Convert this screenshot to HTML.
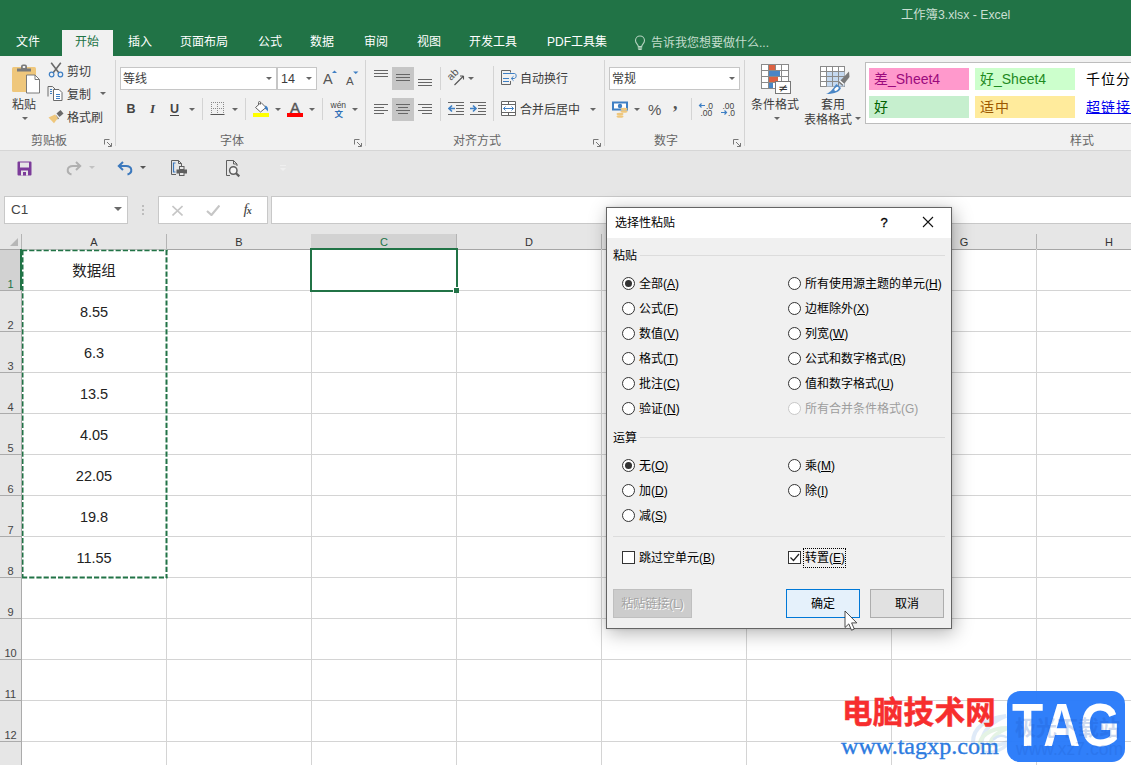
<!DOCTYPE html>
<html lang="zh-CN">
<head>
<meta charset="utf-8">
<title>工作簿3.xlsx - Excel</title>
<style>
*{box-sizing:border-box;margin:0;padding:0}
html,body{width:1131px;height:765px;overflow:hidden;background:#fff}
body{font-family:"Liberation Sans","Noto Sans CJK SC",sans-serif;font-size:12px;color:#262626}
#app{position:relative;width:1131px;height:765px;overflow:hidden;background:#fff}
.abs,#app div,#app span,#app svg{position:absolute}
.t{white-space:nowrap;line-height:16px;height:16px}
/* title + tabs */
#title{left:0;top:0;width:1131px;height:56px;background:#217346}
#title .name{left:901px;top:6.5px;color:#c9dfd2;font-size:12.3px}
.tab{top:33px;color:#fff;font-size:12px;line-height:18px;height:18px;white-space:nowrap}
#tabact{left:62px;top:30px;width:51px;height:27px;background:#f1f1f1}
/* ribbon */
#ribbon{left:0;top:56px;width:1131px;height:94px;background:#f1f1f1}
#ribline{left:0;top:150px;width:1131px;height:1px;background:#d6d6d6}
.sep{width:1px;background:#d4d4d4;top:4px;height:86px}
.sep2{width:1px;background:#d4d4d4}
.glabel{top:77px;color:#666;font-size:12px;line-height:16px;white-space:nowrap}
.rt{color:#3c3c3c;font-size:12px;line-height:16px;white-space:nowrap;margin-top:1px}
.box{background:#fff;border:1px solid #c6c6c6}
.arr{width:0;height:0;border-left:3px solid transparent;border-right:3px solid transparent;border-top:3px solid #666}
.sty{width:100px;height:22px;font-size:14px;line-height:22px;padding-left:5px;white-space:nowrap;overflow:hidden}
/* qat */
#qat{left:0;top:151px;width:1131px;height:39px;background:#e6e6e6}
#fbar{left:0;top:190px;width:1131px;height:43px;background:#e6e6e6}
/* grid */
#grid{left:0;top:233px;width:1131px;height:532px;background:#fff}
.ch{top:1px;height:16px;background:#e6e6e6;color:#333;font-size:11px;line-height:16px;text-align:center}
.rh{left:0;width:21px;color:#444;font-size:11px;text-align:center;line-height:14px}
.vl{top:16px;width:1px;height:520px;background:#d4d4d4}
.hl{left:0;width:1131px;height:1px;background:#d4d4d4}
.cell{left:22px;width:144px;text-align:center;font-size:14.5px;line-height:20px;color:#222}
/* dialog */
#dlg{left:606px;top:207px;width:346px;height:422px;background:#f0f0f0;border:1px solid #646464;box-shadow:2px 4px 18px rgba(0,0,0,.3),0 0 3px rgba(0,0,0,.12)}
#dlg .tb{left:0;top:0;width:344px;height:30px;background:#fff}
.dt{color:#000;font-size:12px;line-height:16px;white-space:nowrap}
.dis{color:#9d9d9d}
.radio{width:13px;height:13px;border:1px solid #333;border-radius:50%;background:#fff}
.radio.on::after{content:"";position:absolute;left:2px;top:2px;width:7px;height:7px;border-radius:50%;background:#333}
.radio.off{border-color:#c8c8c8}
.chk{width:13px;height:13px;border:1px solid #333;background:#fff}
.gl{height:1px;background:#dcdcdc}
.btn{height:28px;border:1px solid #adadad;background:#e1e1e1;text-align:center;line-height:26px;font-size:12px;color:#000}
u{text-decoration:underline;text-underline-offset:1px}
</style>
</head>
<body>
<div id="app">
<div id="title">
<div class="name t">工作簿3.xlsx - Excel</div>
<div id="tabact"></div>
<div class="tab" style="left:16px">文件</div>
<div class="tab" style="left:75px;color:#217346">开始</div>
<div class="tab" style="left:128px">插入</div>
<div class="tab" style="left:180px">页面布局</div>
<div class="tab" style="left:258px">公式</div>
<div class="tab" style="left:310px">数据</div>
<div class="tab" style="left:364px">审阅</div>
<div class="tab" style="left:417px">视图</div>
<div class="tab" style="left:469px">开发工具</div>
<div class="tab" style="left:547px">PDF工具集</div>
<svg style="left:634px;top:35px" width="12" height="16" viewBox="0 0 12 16"><path d="M4.300 11.500C4.300 9.500 1.500 8.500 1.500 5.500a4.500 4.500 0 0 1 9 0c0 3-2.800 4-2.800 6z" fill="none" stroke="#b5d3c0" stroke-width="1.100"/><path d="M3.800 12.800h4.400M4.300 14.300h3.400" stroke="#b5d3c0" stroke-width="1.200" fill="none"/></svg>
<div class="tab" style="left:651px;top:34px;color:#c4ddcd">告诉我您想要做什么...</div>
</div>

<div id="ribbon">
<!-- clipboard group -->
<svg style="left:11px;top:7px" width="30" height="32" viewBox="0 0 30 32">
<rect x="1" y="4" width="24" height="25" rx="1.500" fill="#efc77c"/>
<path d="M6 8.500v-3h4V3.500a2 2 0 0 1 2-2h2a2 2 0 0 1 2 2V5.500h4v3z" fill="#7a7a7a"/>
<rect x="11.800" y="3" width="2.400" height="2" fill="#f1f1f1"/>
<path d="M15.500 12h8.500l4.500 4.500V30h-13z" fill="#fff" stroke="#7a7a7a" stroke-width="1"/>
<path d="M24 12v4.500h4.500" fill="none" stroke="#7a7a7a" stroke-width="1"/>
</svg>
<div class="rt" style="left:12px;top:39.500px">粘贴</div>
<div class="arr" style="left:22px;top:61px"></div>
<!-- scissors -->
<svg style="left:48px;top:6px" width="16" height="16" viewBox="0 0 16 16">
<path d="M3.200 0.800L11 11M12.800 0.800L5 11" stroke="#6a6a6a" stroke-width="1.600" fill="none"/>
<circle cx="3.600" cy="12.500" r="2.300" fill="none" stroke="#3e7fc4" stroke-width="1.200"/>
<circle cx="12.400" cy="12.500" r="2.300" fill="none" stroke="#3e7fc4" stroke-width="1.200"/>
</svg>
<div class="rt" style="left:67px;top:7px">剪切</div>
<!-- copy -->
<svg style="left:47px;top:30px" width="17" height="15" viewBox="0 0 17 15">
<path d="M1 10.500V0.500h4.500L8 3" fill="none" stroke="#6a6a6a"/>
<path d="M6.500 3.500h5.500l3 3V14.500h-8.500z" fill="#fff" stroke="#6a6a6a"/>
<path d="M3 3.500h2M3 5.500h2M3 7.500h2M9 8.500h4M9 10.500h4M9 12.500h4" stroke="#3e7fc4" fill="none"/>
</svg>
<div class="rt" style="left:67px;top:30px">复制</div>
<div class="arr" style="left:100px;top:36px"></div>
<!-- format painter -->
<svg style="left:48px;top:53px" width="17" height="15" viewBox="0 0 17 15">
<path d="M8.500 4.500l4-3.500 3 3.500-4 3.500z" fill="#6a6a6a"/>
<path d="M7.500 5.500l3.500 4-1.200 1z" fill="#6a6a6a"/>
<path d="M0.500 8.500l6.500-3 3 3.500-4 5.200z" fill="#efc77c"/>
</svg>
<div class="rt" style="left:67px;top:53px">格式刷</div>
<div class="glabel" style="left:31px">剪贴板</div>
<svg class="lnch" style="left:104px;top:83px" width="8" height="8" viewBox="0 0 8 8"><path d="M0.500 5.500V0.500h5" fill="none" stroke="#777"/><path d="M3 3l4 4M7.500 4v3.500H4" fill="none" stroke="#777"/></svg>
<div class="sep" style="left:115px"></div>

<!-- font group -->
<div class="box" style="left:120px;top:11px;width:157px;height:23px"></div>
<div class="rt" style="left:123px;top:14px">等线</div>
<div class="arr" style="left:266px;top:21px"></div>
<div class="box" style="left:277px;top:11px;width:40px;height:23px"></div>
<div class="rt" style="left:281px;top:14px;font-size:12.500px">14</div>
<div class="arr" style="left:306px;top:21px"></div>
<div class="rt" style="left:323px;top:14px;font-size:14.500px;color:#555">A</div>
<svg style="left:331.500px;top:14px" width="5" height="3.500" viewBox="0 0 6 4"><path d="M0 3.500L3 0.500 6 3.500z" fill="#3e7fc4"/></svg>
<div class="rt" style="left:346px;top:15.500px;font-size:11.500px;color:#555">A</div>
<svg style="left:353px;top:14.500px" width="5.500" height="3.500" viewBox="0 0 6 4"><path d="M0 0.500L3 3.500 6 0.500z" fill="#3e7fc4"/></svg>

<div class="rt" style="left:126.500px;top:44px;font-weight:bold;font-size:12.500px;color:#444">B</div>
<div class="rt" style="left:150px;top:44px;font-style:italic;font-weight:bold;font-size:13px;color:#444;font-family:'Liberation Serif',serif">I</div>
<div class="rt" style="left:170px;top:44px;font-size:12.500px;color:#444;font-weight:bold">U</div>
<div style="left:170px;top:59px;width:9px;height:1px;background:#444"></div>
<div class="arr" style="left:189px;top:52px"></div>
<div class="sep2" style="left:202px;top:42px;height:22px"></div>
<svg style="left:210px;top:46px" width="15" height="14" viewBox="0 0 15 14">
<path d="M1 0.500h13M1 6.500h13M1.500 0v12M7.500 0v12M13.500 0v12" stroke="#8a8a8a" stroke-dasharray="1 1" fill="none"/>
<path d="M0.500 12.500h14" stroke="#555" stroke-width="1"/>
</svg>
<div class="arr" style="left:232px;top:52px"></div>
<div class="sep2" style="left:245px;top:42px;height:22px"></div>
<!-- fill bucket -->
<svg style="left:253px;top:45px" width="17" height="17" viewBox="0 0 17 17">
<rect x="0" y="12" width="16" height="4" fill="#ffff00"/>
<path d="M2.500 6.500L8 1.500l5 5-5.500 4.500z" fill="#fff" stroke="#666" stroke-width="1"/>
<path d="M5.500 4V1.500a1 1 0 0 1 2 0V3.500" fill="none" stroke="#666" stroke-width="1"/>
<path d="M12.500 4.500c2.200 1 3.300 3.500 2 6-0.800-1.800-1.800-2.500-3-3z" fill="#3e7fc4"/>
</svg>
<div class="arr" style="left:275px;top:52px"></div>
<div class="rt" style="left:290px;top:43px;font-size:15px;color:#555;-webkit-text-stroke:0.400px #555">A</div>
<div style="left:287px;top:57px;width:16px;height:4px;background:#ff0000"></div>
<div class="arr" style="left:309px;top:52px"></div>
<div class="sep2" style="left:322px;top:42px;height:22px"></div>
<div class="rt" style="left:330.500px;top:43px;font-size:8.500px;line-height:10px;height:10px;color:#444">wén</div>
<div class="rt" style="left:334.500px;top:52px;font-size:8.500px;line-height:10px;height:10px;color:#2f6fb7;font-weight:bold">文</div>
<div class="arr" style="left:352px;top:52px"></div>
<div class="glabel" style="left:220px">字体</div>
<svg class="lnch" style="left:354px;top:83px" width="8" height="8" viewBox="0 0 8 8"><path d="M0.500 5.500V0.500h5" fill="none" stroke="#777"/><path d="M3 3l4 4M7.500 4v3.500H4" fill="none" stroke="#777"/></svg>
<div class="sep" style="left:365px"></div>
<!-- alignment group -->
<div style="left:392px;top:11px;width:22px;height:23px;background:#c6c6c6"></div>
<div style="left:392px;top:42px;width:22px;height:23px;background:#c6c6c6"></div>
<svg style="left:374px;top:11px" width="60" height="23" viewBox="0 0 60 23">
<path d="M0 3.500h14M0 6.500h14M0 9.500h14M22 7.500h14M22 10.500h14M22 13.500h14M44 12.500h14M44 15.500h14M44 18.500h14" stroke="#666" fill="none"/>
</svg>
<svg style="left:374px;top:41px" width="60" height="23" viewBox="0 0 60 23">
<path d="M0 7.500h14M0 10.500h10M0 13.500h14M0 16.500h10M22 7.500h14M24 10.500h10M22 13.500h14M24 16.500h10M44 7.500h14M48 10.500h10M44 13.500h14M48 16.500h10" stroke="#666" fill="none"/>
</svg>
<div class="sep2" style="left:440px;top:11px;height:23px"></div>
<div class="sep2" style="left:440px;top:42px;height:23px"></div>
<!-- orientation -->
<svg style="left:447px;top:13px" width="18" height="18" viewBox="0 0 18 18">
<text x="0" y="0" transform="translate(4 12) rotate(-45)" font-family="Liberation Sans, sans-serif" font-size="10.500" fill="#555">ab</text>
<path d="M7.500 16L16.500 7M16.500 7h-3.500M16.500 7v3.500" stroke="#555" stroke-width="1.100" fill="none"/>
</svg>
<div class="arr" style="left:468px;top:21px"></div>
<!-- indent -->
<svg style="left:448px;top:46px" width="40" height="14" viewBox="0 0 40 14">
<path d="M0 0.500h16M8 3.500h8M8 6.500h8M8 9.500h8M0 12.500h16M22 0.500h16M30 3.500h8M30 6.500h8M30 9.500h8M22 12.500h16" stroke="#666" fill="none"/>
<path d="M7 6.500H1.500M4 3.500L1 6.500l3 3" stroke="#3e7fc4" stroke-width="1.600" fill="none"/>
<path d="M22 6.500h5.500M25 3.500l3 3-3 3" stroke="#3e7fc4" stroke-width="1.600" fill="none"/>
</svg>
<div class="sep2" style="left:493px;top:10px;height:55px"></div>
<!-- wrap -->
<svg style="left:500px;top:14px" width="18" height="16" viewBox="0 0 18 16">
<path d="M10.500 2.500V0.500H1.500V14.500H10.500V11" fill="none" stroke="#666"/>
<path d="M3 3.500h11.500M3 8.500h6M3 11.500h6" stroke="#3e7fc4" fill="none"/>
<path d="M14.500 3.500c2.300 0 2.300 5-0.500 5H11.500M13.500 6.300l-2.300 2.200 2.300 2.200" stroke="#3e7fc4" fill="none"/>
</svg>
<div class="rt" style="left:520px;top:14px">自动换行</div>
<!-- merge -->
<svg style="left:500px;top:45px" width="17" height="16" viewBox="0 0 17 16">
<path d="M1.500 0.500h14v14h-14zM1.500 3.500h14M1.500 11.500h14M8.500 0.500v3M8.500 11.500v3" fill="#fff" stroke="#666"/>
<path d="M3.500 7.500h10M5.500 5.500l-2 2 2 2M11.500 5.500l2 2-2 2" stroke="#3e7fc4" fill="none"/>
</svg>
<div class="rt" style="left:520px;top:45px">合并后居中</div>
<div class="arr" style="left:590px;top:52px"></div>
<div class="glabel" style="left:453px">对齐方式</div>
<svg class="lnch" style="left:593px;top:83px" width="8" height="8" viewBox="0 0 8 8"><path d="M0.500 5.500V0.500h5" fill="none" stroke="#777"/><path d="M3 3l4 4M7.500 4v3.500H4" fill="none" stroke="#777"/></svg>
<div class="sep" style="left:604px"></div>

<!-- number group -->
<div class="box" style="left:609px;top:11px;width:131px;height:23px"></div>
<div class="rt" style="left:612px;top:14px">常规</div>
<div class="arr" style="left:729px;top:21px"></div>
<svg style="left:612px;top:45px" width="17" height="17" viewBox="0 0 17 17">
<rect x="1" y="1.500" width="14" height="7" fill="#fff" stroke="#3e7fc4" stroke-width="2"/>
<circle cx="8" cy="5" r="2.200" fill="#3e7fc4"/>
<ellipse cx="12" cy="8" rx="3.500" ry="1.300" fill="#efc77c"/>
<ellipse cx="12" cy="10.500" rx="3.500" ry="1.300" fill="#efc77c"/>
<ellipse cx="8" cy="13" rx="3.500" ry="1.300" fill="#efc77c"/>
<ellipse cx="8" cy="15.500" rx="3.500" ry="1.300" fill="#efc77c"/>
</svg>
<div class="arr" style="left:634px;top:52px"></div>
<div class="rt" style="left:648px;top:44.500px;font-size:15px;color:#555">%</div>
<div class="rt" style="left:673px;top:38px;font-size:18px;font-weight:bold;color:#555;font-family:'Liberation Serif',serif">,</div>
<div class="sep2" style="left:691px;top:42px;height:22px"></div>
<svg style="left:698px;top:46px" width="38" height="15" viewBox="0 0 38 15">
<g font-family="Liberation Sans, sans-serif" font-size="8.500" fill="#444">
<text x="8" y="6.500">.0</text><text x="2.500" y="13.500">.00</text>
<text x="24.500" y="6.500">.00</text><text x="30" y="13.500">.0</text>
</g>
<path d="M7 3.500H1.500M3.500 1.500l-2 2 2 2" stroke="#3e7fc4" stroke-width="1.200" fill="none"/>
<path d="M23 10.500h5.500M26.500 8.500l2 2-2 2" stroke="#3e7fc4" stroke-width="1.200" fill="none"/>
</svg>
<div class="glabel" style="left:654px">数字</div>
<svg class="lnch" style="left:733px;top:83px" width="8" height="8" viewBox="0 0 8 8"><path d="M0.500 5.500V0.500h5" fill="none" stroke="#777"/><path d="M3 3l4 4M7.500 4v3.500H4" fill="none" stroke="#777"/></svg>
<div class="sep" style="left:744px"></div>

<!-- styles group -->
<svg style="left:760px;top:7px" width="32" height="32" viewBox="0 0 32 32">
<rect x="1.500" y="1.500" width="27" height="24" fill="#fff" stroke="#8a8a8a"/>
<rect x="9" y="2" width="6" height="6" fill="#dc6141"/>
<rect x="9" y="8" width="11" height="6" fill="#4a86c5"/>
<rect x="9" y="14" width="9" height="6" fill="#dc6141"/>
<rect x="9" y="20" width="4" height="5" fill="#4a86c5"/>
<path d="M1.500 7.500h27M1.500 13.500h27M1.500 19.500h27M8.500 1.500v24M15.500 1.500v6M21.500 1.500v24M15.500 20v5" stroke="#8a8a8a" fill="none"/>
<rect x="15.500" y="18.500" width="15" height="12" fill="#fff" stroke="#777"/>
<text x="23" y="29" text-anchor="middle" font-family="DejaVu Sans, sans-serif" font-size="12" fill="#333">≠</text>
</svg>
<div class="rt" style="left:751px;top:39.500px">条件格式</div>
<div class="arr" style="left:774px;top:61px"></div>
<svg style="left:819px;top:9px" width="32" height="30" viewBox="0 0 32 30">
<rect x="1.500" y="1.500" width="24" height="20" fill="#fff" stroke="#8a8a8a"/>
<rect x="7.500" y="6.500" width="18" height="15" fill="#c5d9f0"/>
<path d="M1.500 6.500h24M1.500 11.500h24M1.500 16.500h24M7.500 1.500v20M13.500 1.500v20M19.500 1.500v20" stroke="#8a8a8a" fill="none"/>
<path d="M30 6.500l0.500 5.500-7 9-4-3.500z" fill="#7a7a7a"/>
<path d="M20.500 15.500l4.500 4" stroke="#fff" stroke-width="1.300"/>
<path d="M17.500 19l4.500 4c-1.500 3.500-5.500 6-15 6 5.500-2 7.500-6.500 10.500-10z" fill="#4a86c5"/>
<ellipse cx="17.500" cy="23.800" rx="2.600" ry="1.500" transform="rotate(-40 17.500 23.800)" fill="#fff"/>
</svg>
<div class="rt" style="left:821px;top:39.500px">套用</div>
<div class="rt" style="left:804px;top:54.500px">表格格式</div>
<div class="arr" style="left:855px;top:61px"></div>
<div style="left:865px;top:6px;width:270px;height:62px;background:#fff;border:1px solid #bdbdbd"></div>
<div class="sty" style="left:869px;top:12px;background:#ff99cc;color:#9c0a7d">差_Sheet4</div>
<div class="sty" style="left:975px;top:12px;background:#ccffcc;color:#1f8a1f">好_Sheet4</div>
<div class="sty" style="left:1081px;top:12px;width:60px;color:#000;letter-spacing:1px">千位分</div>
<div class="sty" style="left:869px;top:40px;background:#c6efce;color:#006100">好</div>
<div class="sty" style="left:975px;top:40px;background:#ffeb9c;color:#9c5700;letter-spacing:1px">适中</div>
<div class="sty" style="left:1081px;top:40px;width:60px;color:#0000ee;text-decoration:underline;letter-spacing:1px">超链接</div>
<div class="glabel" style="left:1070px">样式</div>

</div>
<div id="ribline"></div>

<div id="qat">
<!-- save -->
<svg style="left:17px;top:9.500px" width="15" height="15" viewBox="0 0 15 15">
<path d="M1.500 0.500h12a1 1 0 0 1 1 1v12a1 1 0 0 1-1 1h-12a1 1 0 0 1-1-1v-12a1 1 0 0 1 1-1z" fill="#7c3c9a"/>
<rect x="3" y="1.500" width="9" height="5" fill="#e6e6e6"/>
<rect x="4" y="9.500" width="7" height="5" fill="#e6e6e6"/>
<rect x="6" y="11" width="3" height="3.500" fill="#7c3c9a"/>
</svg>
<!-- redo (disabled) -->
<svg style="left:66px;top:9.500px" width="16" height="15" viewBox="0 0 16 15">
<path d="M5.500 13.500C0 12 0.500 5 7 5h7" fill="none" stroke="#b0b0b0" stroke-width="2"/>
<path d="M10 1l4.200 4-4.200 4" fill="none" stroke="#b0b0b0" stroke-width="2"/>
</svg>
<div class="arr" style="left:89px;top:15px;border-top-color:#c2c2c2"></div>
<!-- undo -->
<svg style="left:117px;top:9.500px" width="16" height="15" viewBox="0 0 16 15">
<path d="M10.500 13.500C16 12 15.500 5 9 5H2" fill="none" stroke="#3b78bd" stroke-width="2"/>
<path d="M6 1L1.800 5 6 9" fill="none" stroke="#3b78bd" stroke-width="2"/>
</svg>
<div class="arr" style="left:140px;top:15px;border-top-color:#555"></div>
<!-- print preview & print -->
<svg style="left:170px;top:9px" width="18" height="17" viewBox="0 0 18 17">
<path d="M6 14.500H1.500V0.500h7l3 3V6" fill="none" stroke="#5f5f5f"/>
<path d="M8.500 0.500v3h3" fill="none" stroke="#5f5f5f"/>
<path d="M5.500 3h-2v9h2" fill="none" stroke="#3b78bd" stroke-width="1.200"/>
<rect x="6.500" y="9.500" width="10.500" height="4" fill="#5f5f5f"/>
<rect x="9.500" y="6.500" width="4.500" height="3" fill="#e6e6e6" stroke="#5f5f5f"/>
<rect x="9.500" y="12.500" width="4.500" height="3" fill="#e6e6e6" stroke="#5f5f5f"/>
</svg>
<svg style="left:225px;top:9px" width="17" height="18" viewBox="0 0 17 18">
<path d="M5 15.500H1.500V0.500h7l3.500 3.500V6" fill="none" stroke="#5f5f5f"/>
<path d="M8.500 0.500v3.500h3.500" fill="none" stroke="#5f5f5f"/>
<circle cx="8.300" cy="10.500" r="3.700" fill="#f4f4f4" stroke="#5f5f5f" stroke-width="1.500"/>
<path d="M11 13.200l3.300 3.200" stroke="#5f5f5f" stroke-width="2.200"/>
</svg>
<div style="left:280px;top:14px;width:6px;height:1px;background:#efefef"></div>
<div class="arr" style="left:280px;top:17px;border-top-color:#efefef"></div>
</div>
<div id="fbar">
<div class="box" style="left:4px;top:6px;width:124px;height:28px;border-color:#c8c8c8"></div>
<div class="rt" style="left:11px;top:10.500px;font-size:13.500px;color:#444">C1</div>
<div class="arr" style="left:114px;top:17px;border-left-width:4px;border-right-width:4px;border-top-width:4px;border-top-color:#6a6a6a"></div>
<div style="left:142px;top:15px;width:2px;height:2px;background:#bdbdbd"></div>
<div style="left:142px;top:19px;width:2px;height:2px;background:#bdbdbd"></div>
<div style="left:142px;top:23px;width:2px;height:2px;background:#bdbdbd"></div>
<div class="box" style="left:158px;top:6px;width:110px;height:28px;border-color:#c8c8c8"></div>
<svg style="left:172px;top:15px" width="11" height="11" viewBox="0 0 11 11"><path d="M0.500 1l10 9.500M10.500 1l-10 9.500" stroke="#c6c6c6" stroke-width="1.600" fill="none"/></svg>
<svg style="left:206px;top:15px" width="14" height="11" viewBox="0 0 14 11"><path d="M1 6l4.500 4L13.500 0.500" stroke="#c6c6c6" stroke-width="2.200" fill="none"/></svg>
<div class="rt" style="left:243.500px;top:10px;font-family:'Liberation Serif',serif;font-style:italic;font-size:15px;color:#444">f<span style="position:static;font-size:10px;font-weight:bold;margin-left:-1px">x</span></div>
<div class="box" style="left:271px;top:6px;width:870px;height:28px;border-color:#c8c8c8"></div>
</div>

<div id="grid">
<div style="left:0;top:0;width:1131px;height:16px;background:#e6e6e6"></div>
<div style="left:0;top:16px;width:22px;height:516px;background:#e6e6e6"></div>
<div class="ch" style="left:22px;width:144px;background:none;">A</div>
<div style="left:166px;top:1px;width:1px;height:15px;background:#b4b4b4"></div>
<div class="ch" style="left:167px;width:144px;background:none;">B</div>
<div style="left:311px;top:1px;width:1px;height:15px;background:#b4b4b4"></div>
<div style="left:311px;top:1px;width:146px;height:15px;background:#d2d2d2"></div>
<div class="ch" style="left:312px;width:144px;background:none;color:#217346;">C</div>
<div style="left:456px;top:1px;width:1px;height:15px;background:#b4b4b4"></div>
<div class="ch" style="left:457px;width:144px;background:none;">D</div>
<div style="left:601px;top:1px;width:1px;height:15px;background:#b4b4b4"></div>
<div class="ch" style="left:602px;width:144px;background:none;">E</div>
<div style="left:746px;top:1px;width:1px;height:15px;background:#b4b4b4"></div>
<div class="ch" style="left:747px;width:144px;background:none;">F</div>
<div style="left:891px;top:1px;width:1px;height:15px;background:#b4b4b4"></div>
<div class="ch" style="left:892px;width:144px;background:none;">G</div>
<div style="left:1036px;top:1px;width:1px;height:15px;background:#b4b4b4"></div>
<div class="ch" style="left:1037px;width:144px;background:none;">H</div>
<div style="left:1181px;top:1px;width:1px;height:15px;background:#b4b4b4"></div>
<div style="left:21px;top:1px;width:1px;height:15px;background:#b4b4b4"></div>
<div style="left:0;top:16px;width:1131px;height:1px;background:#a6a6a6"></div>
<svg style="left:9px;top:4px" width="10" height="10" viewBox="0 0 10 10"><path d="M9 1V9H1Z" fill="#b7b7b7"/></svg>
<div style="left:0;top:17px;width:21px;height:40px;background:#d2d2d2"></div>
<div class="rh" style="top:44px;color:#217346;">1</div>
<div style="left:0;top:57px;width:22px;height:1px;background:#ababab"></div>
<div class="hl" style="left:22px;top:57px"></div>
<div class="rh" style="top:85px;">2</div>
<div style="left:0;top:98px;width:22px;height:1px;background:#ababab"></div>
<div class="hl" style="left:22px;top:98px"></div>
<div class="rh" style="top:126px;">3</div>
<div style="left:0;top:139px;width:22px;height:1px;background:#ababab"></div>
<div class="hl" style="left:22px;top:139px"></div>
<div class="rh" style="top:167px;">4</div>
<div style="left:0;top:180px;width:22px;height:1px;background:#ababab"></div>
<div class="hl" style="left:22px;top:180px"></div>
<div class="rh" style="top:208px;">5</div>
<div style="left:0;top:221px;width:22px;height:1px;background:#ababab"></div>
<div class="hl" style="left:22px;top:221px"></div>
<div class="rh" style="top:249px;">6</div>
<div style="left:0;top:262px;width:22px;height:1px;background:#ababab"></div>
<div class="hl" style="left:22px;top:262px"></div>
<div class="rh" style="top:290px;">7</div>
<div style="left:0;top:303px;width:22px;height:1px;background:#ababab"></div>
<div class="hl" style="left:22px;top:303px"></div>
<div class="rh" style="top:331px;">8</div>
<div style="left:0;top:344px;width:22px;height:1px;background:#ababab"></div>
<div class="hl" style="left:22px;top:344px"></div>
<div class="rh" style="top:372px;">9</div>
<div style="left:0;top:385px;width:22px;height:1px;background:#ababab"></div>
<div class="hl" style="left:22px;top:385px"></div>
<div class="rh" style="top:413px;">10</div>
<div style="left:0;top:426px;width:22px;height:1px;background:#ababab"></div>
<div class="hl" style="left:22px;top:426px"></div>
<div class="rh" style="top:454px;">11</div>
<div style="left:0;top:467px;width:22px;height:1px;background:#ababab"></div>
<div class="hl" style="left:22px;top:467px"></div>
<div class="rh" style="top:495px;">12</div>
<div style="left:0;top:508px;width:22px;height:1px;background:#ababab"></div>
<div class="hl" style="left:22px;top:508px"></div>
<div class="rh" style="top:536px;">13</div>
<div style="left:0;top:549px;width:22px;height:1px;background:#ababab"></div>
<div class="hl" style="left:22px;top:549px"></div>
<div style="left:21px;top:17px;width:1px;height:516px;background:#ababab"></div>
<div style="left:20px;top:16px;width:2px;height:41px;background:#217346"></div>
<div class="vl" style="left:166px"></div>
<div class="vl" style="left:311px"></div>
<div class="vl" style="left:456px"></div>
<div class="vl" style="left:601px"></div>
<div class="vl" style="left:746px"></div>
<div class="vl" style="left:891px"></div>
<div class="vl" style="left:1036px"></div>
<div class="cell" style="top:28px">数据组</div>
<div class="cell" style="top:69px">8.55</div>
<div class="cell" style="top:110px">6.3</div>
<div class="cell" style="top:151px">13.5</div>
<div class="cell" style="top:192px">4.05</div>
<div class="cell" style="top:233px">22.05</div>
<div class="cell" style="top:274px">19.8</div>
<div class="cell" style="top:315px">11.55</div>
<svg style="left:20px;top:14px" width="150" height="334" viewBox="0 0 150 334"><g fill="none" stroke="#fff"><path d="M2.750 3V331" stroke-width="1.500"/><path d="M146.500 3V331" stroke-width="2"/><path d="M2 3.500H147.500" stroke-width="1.500"/><path d="M2 330.500H147.500" stroke-width="2"/></g><g fill="none" stroke="#217346" stroke-dasharray="5.200 2"><path d="M2.750 3V331" stroke-width="1.500"/><path d="M146.500 3V331" stroke-width="2"/><path d="M2 3.500H147.500" stroke-width="1.500"/><path d="M2 330.500H147.500" stroke-width="2"/></g></svg>
<div style="left:310px;top:15px;width:148px;height:44px;border:2px solid #217346"></div>
<div style="left:453px;top:54px;width:6px;height:6px;background:#217346;border:1px solid #fff;border-right:0;border-bottom:0"></div>
</div>
<div id="dlg">
<div class="tb"></div>
<div class="dt" style="left:8px;top:7px">选择性粘贴</div>
<div class="dt" style="left:273.5px;top:6.5px;font-size:13px;-webkit-text-stroke:0.300px #000">?</div>
<svg style="left:315px;top:8px" width="12" height="12" viewBox="0 0 12 12"><path d="M1 1l10 10M11 1L1 11" stroke="#111" stroke-width="1.100" fill="none"/></svg>
<div class="dt" style="left:6px;top:40px">粘贴</div>
<div class="gl" style="left:33px;top:47px;width:305px"></div>
<div class="dt" style="left:6px;top:221.5px">运算</div>
<div class="gl" style="left:33px;top:229px;width:305px"></div>
<div class="gl" style="left:6px;top:328px;width:332px"></div>
<div class="radio on" style="left:15px;top:69px"></div>
<div class="dt" style="left:32px;top:68px">全部(<u>A</u>)</div>
<div class="radio" style="left:15px;top:94px"></div>
<div class="dt" style="left:32px;top:93px">公式(<u>F</u>)</div>
<div class="radio" style="left:15px;top:119px"></div>
<div class="dt" style="left:32px;top:118px">数值(<u>V</u>)</div>
<div class="radio" style="left:15px;top:144px"></div>
<div class="dt" style="left:32px;top:143px">格式(<u>T</u>)</div>
<div class="radio" style="left:15px;top:169px"></div>
<div class="dt" style="left:32px;top:168px">批注(<u>C</u>)</div>
<div class="radio" style="left:15px;top:194px"></div>
<div class="dt" style="left:32px;top:193px">验证(<u>N</u>)</div>
<div class="radio" style="left:181px;top:69px"></div>
<div class="dt" style="left:198px;top:68px">所有使用源主题的单元(<u>H</u>)</div>
<div class="radio" style="left:181px;top:94px"></div>
<div class="dt" style="left:198px;top:93px">边框除外(<u>X</u>)</div>
<div class="radio" style="left:181px;top:119px"></div>
<div class="dt" style="left:198px;top:118px">列宽(<u>W</u>)</div>
<div class="radio" style="left:181px;top:144px"></div>
<div class="dt" style="left:198px;top:143px">公式和数字格式(<u>R</u>)</div>
<div class="radio" style="left:181px;top:169px"></div>
<div class="dt" style="left:198px;top:168px">值和数字格式(<u>U</u>)</div>
<div class="radio off" style="left:181px;top:194px"></div>
<div class="dt dis" style="left:198px;top:193px">所有合并条件格式(G)</div>
<div class="radio on" style="left:15px;top:251px"></div>
<div class="dt" style="left:32px;top:250px">无(<u>O</u>)</div>
<div class="radio" style="left:15px;top:276px"></div>
<div class="dt" style="left:32px;top:275px">加(<u>D</u>)</div>
<div class="radio" style="left:15px;top:301px"></div>
<div class="dt" style="left:32px;top:300px">减(<u>S</u>)</div>
<div class="radio" style="left:181px;top:251px"></div>
<div class="dt" style="left:198px;top:250px">乘(<u>M</u>)</div>
<div class="radio" style="left:181px;top:276px"></div>
<div class="dt" style="left:198px;top:275px">除(<u>I</u>)</div>
<div class="chk" style="left:15px;top:343px"></div>
<div class="dt" style="left:32px;top:342px">跳过空单元(<u>B</u>)</div>
<div class="chk" style="left:181px;top:343px"><svg style="left:0;top:0" width="11" height="11" viewBox="0 0 11 11"><path d="M1.500 5.500l3 3 5.500-6.500" stroke="#222" stroke-width="1.200" fill="none"/></svg></div>
<div style="left:196px;top:340px;width:43px;height:20px;border:1px dotted #000"></div>
<div class="dt" style="left:198px;top:342px">转置(<u>E</u>)</div>
<div class="btn" style="left:6px;top:381px;width:79px;height:29px;line-height:28px;background:#cccccc;border-color:#bfbfbf;color:#a3a3a3;text-shadow:1px 1px 0 #fff">粘贴链接(L)</div>
<div class="btn" style="left:179px;top:381px;width:74px;height:29px;background:#e5f1fb;border:1px solid #0078d7;line-height:28px">确定</div>
<div class="btn" style="left:263px;top:381px;width:74px;height:29px;line-height:28px">取消</div>
</div>
<svg style="left:844px;top:610px" width="15" height="22" viewBox="0 0 15 22"><path d="M1 1v16.500l3.800-3.600 2.700 6.300 2.800-1.200-2.700-6.100h5.200z" fill="#fff" stroke="#222" stroke-width="0.800" stroke-linejoin="miter"/></svg>
<div id="wm" style="left:0;top:0;width:1131px;height:765px;pointer-events:none">
<svg style="left:970px;top:712px" width="46" height="44" viewBox="0 0 46 44">
<g fill="none" stroke-linecap="round" opacity="0.280">
<path d="M3 30C3 16 16 6 36 4C24 9 14 16 12 28" stroke="#8fb7e8" stroke-width="4"/>
<path d="M10 36C8 24 20 16 38 16C28 20 20 26 20 34" stroke="#9fd6a0" stroke-width="4"/>
<path d="M14 40C22 42 36 38 42 26C36 32 28 34 22 32" stroke="#8fb7e8" stroke-width="3.500"/>
<path d="M24 27c4-4 9-4 12-2" stroke="#7aa7de" stroke-width="2.500"/>
</g></svg>
<div style="left:842px;top:690px;font-family:'Noto Sans CJK SC','Liberation Sans',sans-serif;font-weight:700;font-size:30.500px;line-height:40px;height:40px;white-space:nowrap;color:#f72e2e;letter-spacing:0.300px;-webkit-text-stroke:0.500px #f72e2e">电脑技术网</div>
<div style="left:841px;top:730px;font-family:'Liberation Serif',serif;font-size:24.100px;line-height:32px;height:32px;white-space:nowrap;color:#2d7be0;-webkit-text-stroke:0.350px #2d7be0">www.tagxp.com</div>
<div style="left:1007px;top:691px;width:118px;height:71px;border-radius:13px;background:rgba(40,122,250,0.960)"></div>
<div style="left:1011.500px;top:690px;font-family:'Liberation Sans',sans-serif;font-weight:bold;font-size:61px;line-height:70px;height:70px;white-space:nowrap;color:#fff;transform:scaleX(0.838);transform-origin:0 0;font-kerning:none">TAG</div>
<div style="left:1015px;top:712px;font-family:'Noto Sans CJK SC',sans-serif;font-weight:700;font-size:21px;line-height:28px;height:28px;white-space:nowrap;color:#1a55c0;opacity:0.220">极光下载站</div>
<div style="left:1016px;top:738px;font-family:'Liberation Sans',sans-serif;font-size:17.500px;line-height:22px;height:22px;white-space:nowrap;color:#1a55c0;opacity:0.200">www.xz7.com</div>
</div>

</div>
</body>
</html>
